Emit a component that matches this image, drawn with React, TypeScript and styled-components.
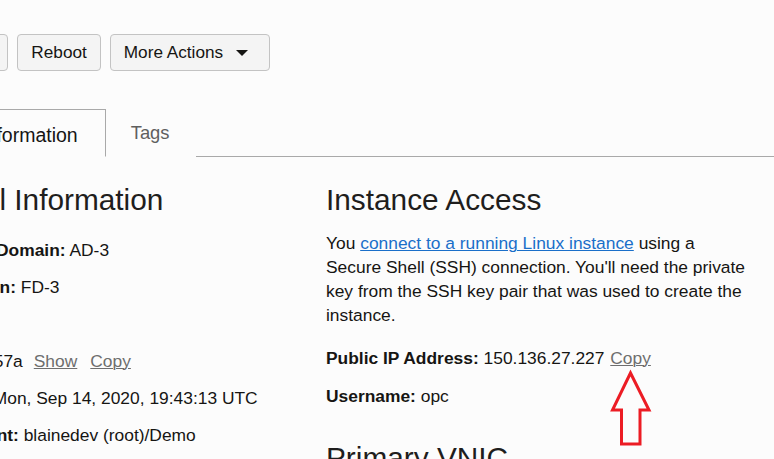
import React from "react";
import styled, { createGlobalStyle } from "styled-components";

const Global = createGlobalStyle`
  html, body { margin: 0; padding: 0; background: #fcfcfc; }
  body {
    font-family: "Liberation Sans", Arial, sans-serif;
    color: #161513;
    overflow: hidden;
  }
`;

const Root = styled.div`
  position: relative;
  width: 774px;
  height: 459px;
  overflow: hidden;
  background: #fcfcfc;
`;

const Shifted = styled.div`
  margin-left: -126px;
  width: 900px;
`;

const Toolbar = styled.div`
  display: flex;
  gap: 9px;
  padding-top: 34px;
  padding-left: 71px;
`;

const Button = styled.button<{ $padRight?: number }>`
  display: inline-flex;
  align-items: center;
  height: 37px;
  padding: 0 ${(p) => p.$padRight ?? 13}px 0 13px;
  font-family: "Liberation Sans", Arial, sans-serif;
  font-size: 17.2px;
  color: #161513;
  background: #f4f4f4;
  border: 1px solid #c3c3c3;
  border-radius: 4px;
  box-sizing: border-box;
`;

const Caret = styled.span`
  display: inline-block;
  width: 0;
  height: 0;
  margin-left: 13px;
  border-left: 6px solid transparent;
  border-right: 6px solid transparent;
  border-top: 6px solid #161513;
`;

const TabBar = styled.div`
  display: flex;
  margin-top: 38px;
  border-bottom: 1px solid #a9a9a9;
`;

const Tab = styled.div<{ $active?: boolean }>`
  box-sizing: border-box;
  height: 48px;
  margin-bottom: -1px;
  border: 1px solid ${(p) => (p.$active ? "#a9a9a9" : "transparent")};
  border-bottom: 1px solid ${(p) => (p.$active ? "#fcfcfc" : "transparent")};
  background: #fcfcfc;
  padding: ${(p) => (p.$active ? "14px 27px 0 26px" : "12px 25px 0 24px")};
  font-size: ${(p) => (p.$active ? "19.5px" : "18.4px")};
  color: ${(p) => (p.$active ? "#161513" : "#5f5f5f")};
  white-space: nowrap;
`;

const Columns = styled.div`
  display: grid;
  grid-template-columns: 426px 426px;
  padding-left: 26px;
  padding-top: 25px;
`;

const Column = styled.div`
  display: flex;
  flex-direction: column;
`;

const Heading = styled.h2<{ $gap?: number }>`
  margin: ${(p) => p.$gap ?? 0}px 0 0 0;
  font-size: 29.8px;
  line-height: 36px;
  font-weight: normal;
  color: #1f1e1d;
  white-space: nowrap;
`;

const InfoList = styled.div`
  display: flex;
  flex-direction: column;
  gap: 13px;
  margin-top: 20px;
`;

const Row = styled.div<{ $gap?: number }>`
  font-size: 17.4px;
  line-height: 24px;
  margin-top: ${(p) => p.$gap ?? 0}px;
  white-space: nowrap;
`;

const Label = styled.b`
  font-weight: bold;
`;

const Para = styled.p`
  margin: 13px 0 0 0;
  font-size: 17.4px;
  line-height: 24px;
  max-width: 422px;
`;

const Link = styled.a`
  color: #1a6fc9;
  text-decoration: underline;
  text-decoration-thickness: 1px;
`;

const Action = styled.a<{ $gap?: number }>`
  color: #6e6e6e;
  text-decoration: underline;
  text-decoration-thickness: 1px;
  margin-left: ${(p) => p.$gap ?? 0}px;
`;

const Arrow = styled.svg`
  position: absolute;
  left: 600px;
  top: 360px;
  overflow: visible;
`;

export default function App() {
  return (
    <Root>
      <Global />
      <Shifted>
        <Toolbar>
          <Button>Stop</Button>
          <Button>Reboot</Button>
          <Button $padRight={21}>
            More Actions
            <Caret />
          </Button>
        </Toolbar>
        <TabBar>
          <Tab $active>Instance Information</Tab>
          <Tab>Tags</Tab>
        </TabBar>
        <Columns>
          <Column>
            <Heading>General Information</Heading>
            <InfoList>
              <Row>
                <Label>Availability Domain:</Label> AD-3
              </Row>
              <Row>
                <Label>Fault Domain:</Label> FD-3
              </Row>
              <Row>
                <Label>Region:</Label> iad
              </Row>
              <Row>
                <Label>OCID:</Label> ...qbr57a
                <Action $gap={11}>Show</Action>
                <Action $gap={13}>Copy</Action>
              </Row>
              <Row>
                <Label>Launched:</Label> Mon, Sep 14, 2020, 19:43:13 UTC
              </Row>
              <Row>
                <Label>Compartment:</Label> blainedev (root)/Demo
              </Row>
            </InfoList>
          </Column>
          <Column>
            <Heading>Instance Access</Heading>
            <Para>
              You <Link>connect to a running Linux instance</Link> using a
              Secure Shell (SSH) connection. You'll need the private key from
              the SSH key pair that was used to create the instance.
            </Para>
            <Row $gap={18.5}>
              <Label>Public IP Address:</Label> 150.136.27.227{" "}
              <Action $gap={1}>Copy</Action>
            </Row>
            <Row $gap={14.5}>
              <Label>Username:</Label> opc
            </Row>
            <Heading $gap={32}>Primary VNIC</Heading>
          </Column>
        </Columns>
      </Shifted>
      <Arrow width="60" height="90" viewBox="600 360 60 90">
        <path
          d="M630.5 373 L612.5 410 L621.5 410 L621.5 444 L640 444 L640 410 L649 410 Z"
          fill="none"
          stroke="#ec1c24"
          strokeWidth="3"
          strokeLinejoin="miter"
        />
      </Arrow>
    </Root>
  );
}
